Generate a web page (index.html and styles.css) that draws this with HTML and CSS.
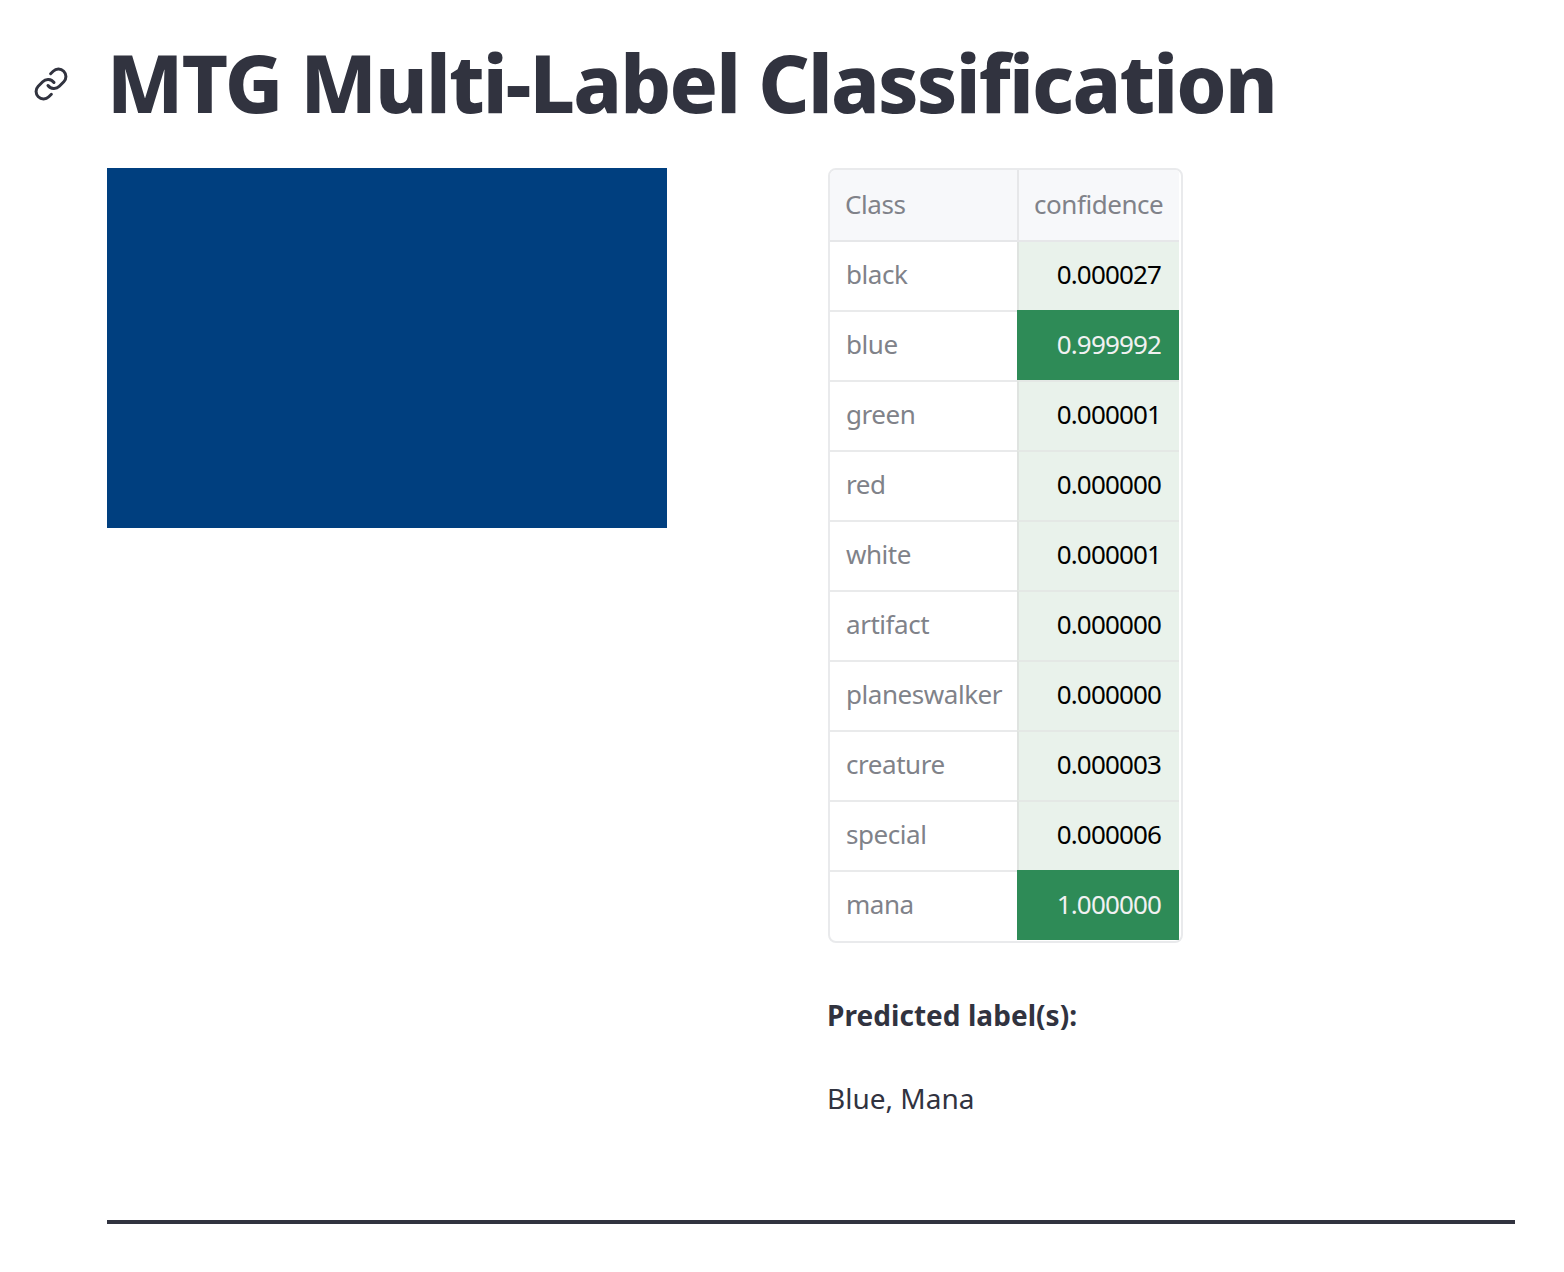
FILE: index.html
```html
<!DOCTYPE html>
<html lang="en">
<head>
    <meta charset="UTF-8">
    <title>MTG Multi-Label Classification</title>
    <link rel="stylesheet" href="styles.css">
</head>
<body>
    <main class="page">
        <header class="title-row">
            <svg class="anchor-icon" viewBox="0 0 24 24" width="36" height="36" fill="none" stroke="#31333f" stroke-width="2" stroke-linecap="round" stroke-linejoin="round">
                <path d="M10 13a5 5 0 0 0 7.54.54l3-3a5 5 0 0 0-7.07-7.07l-1.72 1.71"></path>
                <path d="M14 11a5 5 0 0 0-7.54-.54l-3 3a5 5 0 0 0 7.07 7.07l1.71-1.71"></path>
            </svg>
            <h1>MTG Multi-Label Classification</h1>
        </header>

        <section class="columns">
            <div class="card-image"></div>
            <div class="results">
                <div class="table-wrap">
                    <table>
                        <thead>
                            <tr><th class="name">Class</th><th class="conf">confidence</th></tr>
                        </thead>
                        <tbody>
                            <tr><th>black</th><td>0.000027</td></tr>
                            <tr><th>blue</th><td class="high">0.999992</td></tr>
                            <tr><th>green</th><td>0.000001</td></tr>
                            <tr><th>red</th><td>0.000000</td></tr>
                            <tr><th>white</th><td>0.000001</td></tr>
                            <tr><th>artifact</th><td>0.000000</td></tr>
                            <tr><th>planeswalker</th><td>0.000000</td></tr>
                            <tr><th>creature</th><td>0.000003</td></tr>
                            <tr><th>special</th><td>0.000006</td></tr>
                            <tr><th>mana</th><td class="high">1.000000</td></tr>
                        </tbody>
                    </table>
                </div>
                <p class="label-head">Predicted label(s):</p>
                <p class="label-value">Blue, Mana</p>
            </div>
        </section>

        <hr class="divider">
    </main>
</body>
</html>
```

FILE: styles.css
```css
body {
    margin: 0;
    background-color: #ffffff;
    color: #31333f;
    font-family: "Noto Sans", "Open Sans", sans-serif;
}
.page {
    padding: 0 49px 0 107px;
}
.title-row {
    position: relative;
    height: 168px;
}
.anchor-icon {
    position: absolute;
    left: -74px;
    top: 66px;
}
h1 {
    margin: 0;
    padding-top: 27px;
    font-size: 80px;
    line-height: 110px;
    font-weight: 800;
    letter-spacing: -1.8px;
    white-space: nowrap;
}
.columns {
    display: grid;
    grid-template-columns: 721px 1fr;
}
.card-image {
    width: 560px;
    height: 360px;
    background-color: #003f7f;
}
.table-wrap {
    width: 355px;
    box-sizing: border-box;
    padding: 0 2px 1px 0;
    border: 2px solid #e9eaec;
    border-radius: 8px;
    overflow: hidden;
}
table {
    border-collapse: separate;
    border-spacing: 0;
    table-layout: fixed;
    width: 349px;
    font-size: 26px;
    letter-spacing: -0.45px;
}
th, td {
    box-sizing: border-box;
    font-weight: 400;
}
thead th {
    height: 72px;
    padding: 0 0 2px 15px;
    background-color: #f7f8fa;
    border-bottom: 2px solid #e6e7e9;
    color: #808289;
    text-align: left;
}
thead .name {
    width: 187px;
}
thead .conf {
    border-left: 2px solid #e6e7e9;
    text-align: right;
    padding-right: 18px;
}
tbody th {
    height: 70px;
    padding: 0 0 4px 16px;
    border-top: 2px solid #e9eaeb;
    color: #808289;
    text-align: left;
}
tbody td {
    padding: 0 18px 4px 0;
    background-color: #e9f2eb;
    border-left: 2px solid #dfe3e0;
    border-top: 2px solid #e4e8e5;
    color: #000000;
    letter-spacing: -0.85px;
    text-align: right;
}
tbody td.high {
    background-color: #2e8b57;
    color: #f1f1f1;
    border-color: #2e8b57;
}
tbody tr:first-child th,
tbody tr:first-child td {
    height: 68px;
    border-top: none;
}
.label-head,
.label-value {
    margin: 0 0 0 -1px;
    font-size: 28px;
    line-height: 40px;
}
.label-head {
    margin-top: 52px;
    font-weight: 700;
    letter-spacing: 0.05px;
}
.label-value {
    margin-top: 43px;
}
.divider {
    margin: 102px 0 0;
    border: none;
    height: 4px;
    background-color: #31333f;
}
```
